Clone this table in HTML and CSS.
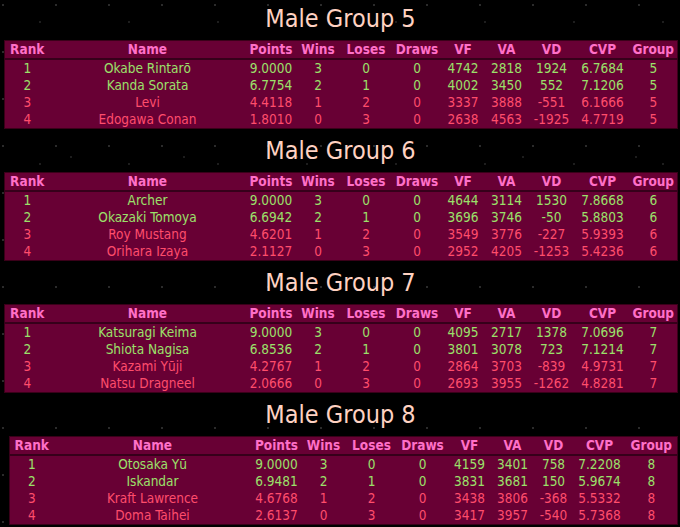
FILE: index.html
```html
<!DOCTYPE html>
<html>
<head>
<meta charset="utf-8">
<link rel="stylesheet" href="styles.css">
</head>
<body>
<main class="page">
  <section class="group">
    <h2 class="title">Male Group 5</h2>
    <table class="standings">
      <colgroup><col class="c-rank"><col class="c-name"><col class="c-pts"><col class="c-wins"><col class="c-loses"><col class="c-draws"><col class="c-vf"><col class="c-va"><col class="c-vd"><col class="c-cvp"><col class="c-group"></colgroup>
      <thead><tr><th>Rank</th><th>Name</th><th>Points</th><th>Wins</th><th>Loses</th><th>Draws</th><th>VF</th><th>VA</th><th>VD</th><th>CVP</th><th>Group</th></tr></thead>
      <tbody>
        <tr class="up"><td>1</td><td>Okabe Rintarō</td><td>9.0000</td><td>3</td><td>0</td><td>0</td><td>4742</td><td>2818</td><td>1924</td><td>6.7684</td><td>5</td></tr>
        <tr class="up"><td>2</td><td>Kanda Sorata</td><td>6.7754</td><td>2</td><td>1</td><td>0</td><td>4002</td><td>3450</td><td>552</td><td>7.1206</td><td>5</td></tr>
        <tr class="out"><td>3</td><td>Levi</td><td>4.4118</td><td>1</td><td>2</td><td>0</td><td>3337</td><td>3888</td><td>-551</td><td>6.1666</td><td>5</td></tr>
        <tr class="out"><td>4</td><td>Edogawa Conan</td><td>1.8010</td><td>0</td><td>3</td><td>0</td><td>2638</td><td>4563</td><td>-1925</td><td>4.7719</td><td>5</td></tr>
      </tbody>
    </table>
  </section>
  <section class="group">
    <h2 class="title">Male Group 6</h2>
    <table class="standings">
      <colgroup><col class="c-rank"><col class="c-name"><col class="c-pts"><col class="c-wins"><col class="c-loses"><col class="c-draws"><col class="c-vf"><col class="c-va"><col class="c-vd"><col class="c-cvp"><col class="c-group"></colgroup>
      <thead><tr><th>Rank</th><th>Name</th><th>Points</th><th>Wins</th><th>Loses</th><th>Draws</th><th>VF</th><th>VA</th><th>VD</th><th>CVP</th><th>Group</th></tr></thead>
      <tbody>
        <tr class="up"><td>1</td><td>Archer</td><td>9.0000</td><td>3</td><td>0</td><td>0</td><td>4644</td><td>3114</td><td>1530</td><td>7.8668</td><td>6</td></tr>
        <tr class="up"><td>2</td><td>Okazaki Tomoya</td><td>6.6942</td><td>2</td><td>1</td><td>0</td><td>3696</td><td>3746</td><td>-50</td><td>5.8803</td><td>6</td></tr>
        <tr class="out"><td>3</td><td>Roy Mustang</td><td>4.6201</td><td>1</td><td>2</td><td>0</td><td>3549</td><td>3776</td><td>-227</td><td>5.9393</td><td>6</td></tr>
        <tr class="out"><td>4</td><td>Orihara Izaya</td><td>2.1127</td><td>0</td><td>3</td><td>0</td><td>2952</td><td>4205</td><td>-1253</td><td>5.4236</td><td>6</td></tr>
      </tbody>
    </table>
  </section>
  <section class="group">
    <h2 class="title">Male Group 7</h2>
    <table class="standings">
      <colgroup><col class="c-rank"><col class="c-name"><col class="c-pts"><col class="c-wins"><col class="c-loses"><col class="c-draws"><col class="c-vf"><col class="c-va"><col class="c-vd"><col class="c-cvp"><col class="c-group"></colgroup>
      <thead><tr><th>Rank</th><th>Name</th><th>Points</th><th>Wins</th><th>Loses</th><th>Draws</th><th>VF</th><th>VA</th><th>VD</th><th>CVP</th><th>Group</th></tr></thead>
      <tbody>
        <tr class="up"><td>1</td><td>Katsuragi Keima</td><td>9.0000</td><td>3</td><td>0</td><td>0</td><td>4095</td><td>2717</td><td>1378</td><td>7.0696</td><td>7</td></tr>
        <tr class="up"><td>2</td><td>Shiota Nagisa</td><td>6.8536</td><td>2</td><td>1</td><td>0</td><td>3801</td><td>3078</td><td>723</td><td>7.1214</td><td>7</td></tr>
        <tr class="out"><td>3</td><td>Kazami Yūji</td><td>4.2767</td><td>1</td><td>2</td><td>0</td><td>2864</td><td>3703</td><td>-839</td><td>4.9731</td><td>7</td></tr>
        <tr class="out"><td>4</td><td>Natsu Dragneel</td><td>2.0666</td><td>0</td><td>3</td><td>0</td><td>2693</td><td>3955</td><td>-1262</td><td>4.8281</td><td>7</td></tr>
      </tbody>
    </table>
  </section>
  <section class="group">
    <h2 class="title">Male Group 8</h2>
    <table class="standings narrow">
      <colgroup><col class="c-rank"><col class="c-name"><col class="c-pts"><col class="c-wins"><col class="c-loses"><col class="c-draws"><col class="c-vf"><col class="c-va"><col class="c-vd"><col class="c-cvp"><col class="c-group"></colgroup>
      <thead><tr><th>Rank</th><th>Name</th><th>Points</th><th>Wins</th><th>Loses</th><th>Draws</th><th>VF</th><th>VA</th><th>VD</th><th>CVP</th><th>Group</th></tr></thead>
      <tbody>
        <tr class="up"><td>1</td><td>Otosaka Yū</td><td>9.0000</td><td>3</td><td>0</td><td>0</td><td>4159</td><td>3401</td><td>758</td><td>7.2208</td><td>8</td></tr>
        <tr class="up"><td>2</td><td>Iskandar</td><td>6.9481</td><td>2</td><td>1</td><td>0</td><td>3831</td><td>3681</td><td>150</td><td>5.9674</td><td>8</td></tr>
        <tr class="out"><td>3</td><td>Kraft Lawrence</td><td>4.6768</td><td>1</td><td>2</td><td>0</td><td>3438</td><td>3806</td><td>-368</td><td>5.5332</td><td>8</td></tr>
        <tr class="out"><td>4</td><td>Doma Taihei</td><td>2.6137</td><td>0</td><td>3</td><td>0</td><td>3417</td><td>3957</td><td>-540</td><td>5.7368</td><td>8</td></tr>
      </tbody>
    </table>
  </section>
</main>
</body>
</html>
```

FILE: styles.css
```css
html, body {
  margin: 0;
  padding: 0;
}
body {
  width: 680px;
  height: 527px;
  overflow: hidden;
  background-color: #000;
  background-image:
    radial-gradient(circle at 3px 5px, rgba(150,150,150,0.35) 0.6px, transparent 1.2px),
    radial-gradient(circle at 40px 22px, rgba(120,120,120,0.3) 0.6px, transparent 1.2px),
    radial-gradient(circle at 71px 60px, rgba(140,140,140,0.25) 0.6px, transparent 1.2px);
  background-size: 53px 47px, 89px 71px, 113px 97px;
  font-family: "DejaVu Sans Condensed", "DejaVu Sans", sans-serif;
}
.page {
  display: flex;
  flex-direction: column;
  padding: 4px 3px 0 4px;
}
.group {
  display: flex;
  flex-direction: column;
  align-items: center;
  margin-bottom: 7px;
}
.title {
  margin: 0 0 6px;
  font-family: "DejaVu Sans Condensed", "DejaVu Sans", sans-serif;
  font-weight: normal;
  font-size: 25px;
  line-height: 30px;
  color: #ffd2c2;
}
.standings {
  width: 673px;
  table-layout: fixed;
  border-collapse: collapse;
  background: #680034;
  border: 1px solid #3a0019;
  font-size: 13px;
  text-align: center;
}
.standings th {
  height: 17px;
  padding: 0;
  color: #ff70c8;
  font-weight: bold;
  font-size: 13.5px;
  line-height: 17px;
  border-bottom: 2px solid #36001a;
}
.standings td {
  height: 17px;
  padding: 0;
  font-size: 13.5px;
  line-height: 17px;
  white-space: nowrap;
}
.standings .up td { color: #9be06a; }
.standings .out td { color: #ff4d6c; }

.c-rank { width: 46px; }
.c-name { width: 195px; }
.c-pts { width: 52px; }
.c-wins { width: 42px; }
.c-loses { width: 54px; }
.c-draws { width: 48px; }
.c-vf { width: 44px; }
.c-va { width: 43px; }
.c-vd { width: 47px; }
.c-cvp { width: 55px; }
.c-group { width: 47px; }

.standings.narrow { width: 668px; margin-left: 6px; }
.narrow .c-rank { width: 44px; }
.narrow .c-name { width: 198px; }
.narrow .c-pts { width: 50px; }
.narrow .c-wins { width: 44px; }
.narrow .c-loses { width: 52px; }
.narrow .c-draws { width: 50px; }
.narrow .c-vf { width: 44px; }
.narrow .c-va { width: 42px; }
.narrow .c-vd { width: 40px; }
.narrow .c-cvp { width: 52px; }
.narrow .c-group { width: 52px; }
```
